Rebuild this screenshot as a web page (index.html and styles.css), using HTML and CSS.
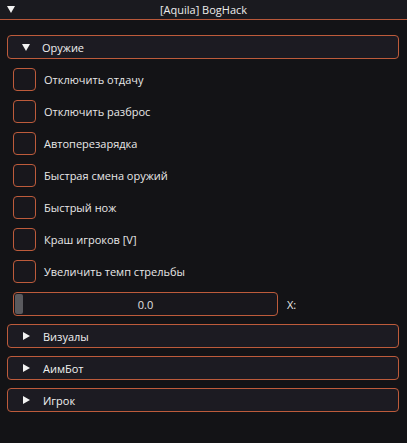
FILE: index.html
```html
<!DOCTYPE html>
<html>
<head>
<meta charset="utf-8">
<link rel="stylesheet" href="styles.css">
</head>
<body>
<div class="window">
  <div class="titlebar">
    <span class="tri-down title-tri"></span>
    <span class="title">[Aquila] BogHack</span>
  </div>
  <div class="content">
    <div class="header open"><span class="tri-down"></span><span class="htext">Оружие</span></div>
    <div class="items">
      <div class="row"><span class="check"></span><span class="label">Отключить отдачу</span></div>
      <div class="row"><span class="check"></span><span class="label">Отключить разброс</span></div>
      <div class="row"><span class="check"></span><span class="label">Автоперезарядка</span></div>
      <div class="row"><span class="check"></span><span class="label">Быстрая смена оружий</span></div>
      <div class="row"><span class="check"></span><span class="label">Быстрый нож</span></div>
      <div class="row"><span class="check"></span><span class="label">Краш игроков [V]</span></div>
      <div class="row"><span class="check"></span><span class="label">Увеличить темп стрельбы</span></div>
      <div class="row slider-row">
        <div class="slider"><span class="grab"></span><span class="sval">0.0</span></div>
        <span class="label">X:</span>
      </div>
    </div>
    <div class="header"><span class="tri-right"></span><span class="htext">Визуалы</span></div>
    <div class="header"><span class="tri-right"></span><span class="htext">АимБот</span></div>
    <div class="header"><span class="tri-right"></span><span class="htext">Игрок</span></div>
  </div>
</div>
</body>
</html>
```
FILE: styles.css
```css
html, body {
  margin: 0;
  padding: 0;
  background: #131316;
  width: 407px;
  height: 443px;
  overflow: hidden;
  font-family: "Open Sans", "Noto Sans", sans-serif;
  font-size: 11px;
  color: #e8e8e8;
}
.titlebar {
  height: 19px;
  background: #1a1a1f;
  border-bottom: 1px solid #b8583a;
  display: flex;
  align-items: center;
  position: relative;
}
.title {
  flex: 1;
  text-align: center;
  color: #ececec;
}
.title-tri {
  position: absolute;
  left: 7px;
  top: 6px;
}
.tri-down {
  display: inline-block;
  width: 0;
  height: 0;
  border-left: 4px solid transparent;
  border-right: 4px solid transparent;
  border-top: 7px solid #f2f2f2;
}
.tri-right {
  display: inline-block;
  width: 0;
  height: 0;
  border-top: 4px solid transparent;
  border-bottom: 4px solid transparent;
  border-left: 7px solid #f2f2f2;
}
.content {
  padding: 15px 8px 0 7px;
  display: flex;
  flex-direction: column;
  gap: 8px;
}
.header {
  height: 22px;
  border: 1px solid #bd5b3b;
  border-radius: 4px;
  background: #1c1b22;
  display: flex;
  align-items: center;
  padding-left: 14px;
}
.header .tri-down { margin-right: 12px; }
.header .tri-right { margin-right: 13px; margin-left: 1px; }
.htext { color: #f0f0f0; }
.items {
  display: flex;
  flex-direction: column;
  gap: 9px;
  padding: 1px 0 0 6px;
}
.row {
  display: flex;
  align-items: center;
  height: 23px;
}
.check {
  width: 21px;
  height: 21px;
  border: 1px solid #bd5b3b;
  border-radius: 4px;
  background: #18171c;
  margin-right: 8px;
  flex: none;
}
.label { color: #e8e8e8; }
.slider-row { height: 24px; }
.slider {
  width: 263px;
  height: 22px;
  border: 1px solid #bd5b3b;
  border-radius: 4px;
  background: #18171c;
  position: relative;
  display: flex;
  align-items: center;
  justify-content: center;
  margin-right: 9px;
}
.grab {
  position: absolute;
  left: 1px;
  top: 1px;
  width: 8px;
  height: 20px;
  background: #5a5a5e;
  border-radius: 2px;
}
.sval { color: #e0e0e0; }
```
